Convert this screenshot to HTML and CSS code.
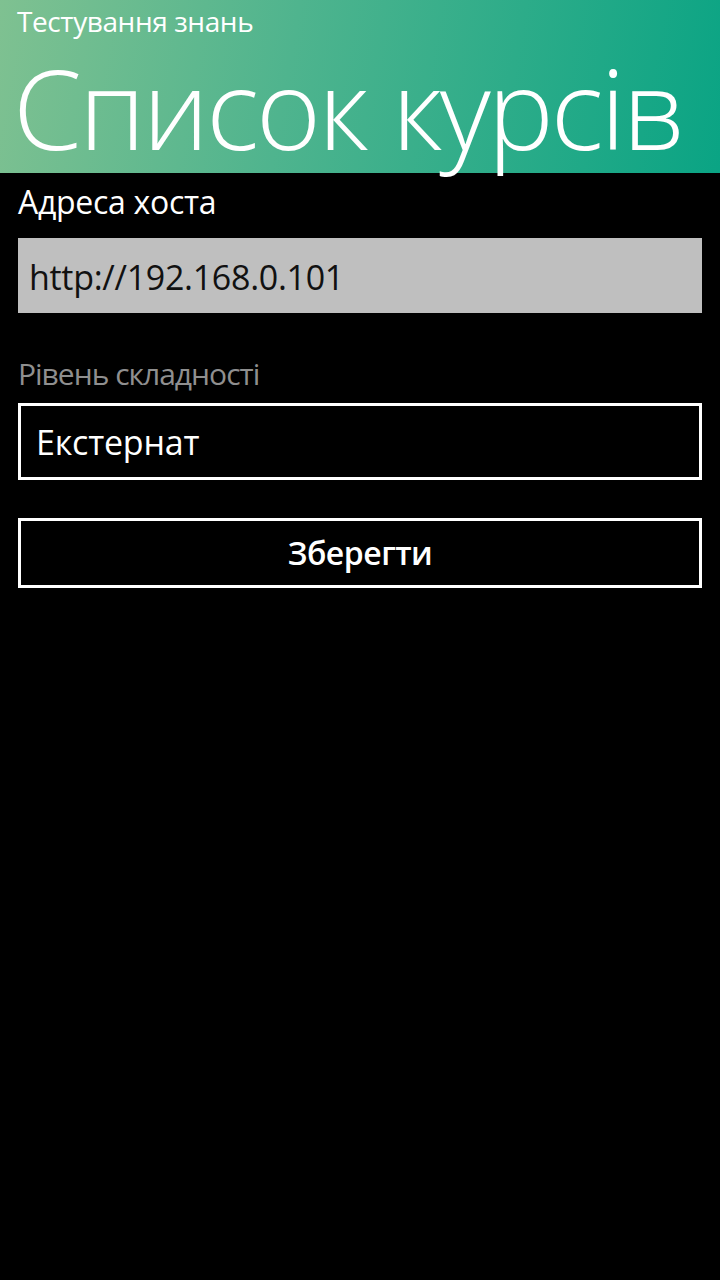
FILE: index.html
```html
<!DOCTYPE html>
<html lang="uk">
<head>
<meta charset="utf-8">
<title>Список курсів</title>
<link rel="stylesheet" href="styles.css">
</head>
<body>
<header class="header">
  <div class="app-title">Тестування знань</div>
  <h1 class="page-title">Список курсів</h1>
</header>
<main class="content">
  <label class="label">Адреса хоста</label>
  <div class="textbox">http://192.168.0.101</div>
  <label class="label label-muted">Рівень складності</label>
  <div class="picker">Екстернат</div>
  <button class="button">Зберегти</button>
</main>
</body>
</html>
```
FILE: styles.css
```css
html, body {
  margin: 0;
  padding: 0;
  background: #000;
  height: 100%;
}
body {
  font-family: "Open Sans", "Noto Sans", sans-serif;
  color: #fff;
  width: 720px;
  height: 1280px;
  overflow: hidden;
}
.header {
  height: 173px;
  box-sizing: border-box;
  padding: 0 0 0 17px;
  background: linear-gradient(100deg, #7fc191 0%, #4fb48e 40%, #0aa484 100%);
  display: flex;
  flex-direction: column;
}
.app-title {
  font-size: 28px;
  line-height: 28px;
  margin-top: 7px;
  letter-spacing: -0.4px;
}
.page-title {
  margin: 0;
  font-weight: 300;
  font-size: 111px;
  line-height: 104px;
  margin-top: 20px;
  margin-left: -4px;
  letter-spacing: -3px;
}
.content {
  display: flex;
  flex-direction: column;
  padding: 0 18px;
}
.label {
  font-size: 32px;
  line-height: 32px;
  margin-top: 13px;
  letter-spacing: -0.3px;
}
.label-muted {
  color: #8f8f8f;
  font-size: 30px;
  line-height: 30px;
  letter-spacing: -1px;
  margin-top: 46px;
}
.textbox {
  margin-top: 20px;
  height: 75px;
  box-sizing: border-box;
  background: #bfbfbf;
  color: #111;
  font-size: 34px;
  line-height: 71px;
  padding-top: 4px;
  padding-left: 11px;
  letter-spacing: -0.3px;
}
.picker {
  margin-top: 14px;
  height: 77px;
  box-sizing: border-box;
  border: 3px solid #fff;
  font-size: 34px;
  line-height: 71px;
  padding-top: 1px;
  padding-left: 15px;
  letter-spacing: -0.2px;
}
.button {
  margin-top: 38px;
  height: 70px;
  box-sizing: border-box;
  border: 3px solid #fff;
  background: #000;
  color: #fff;
  font-family: inherit;
  font-weight: 600;
  font-size: 32px;
  line-height: 62px;
  padding: 0;
  letter-spacing: -0.5px;
}
```
